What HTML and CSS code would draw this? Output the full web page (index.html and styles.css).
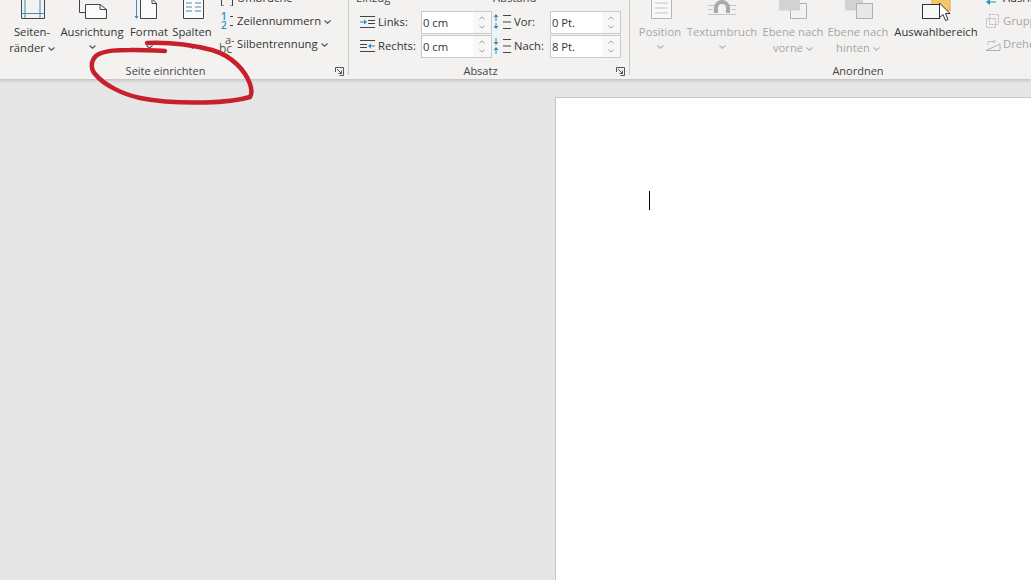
FILE: index.html
```html
<!DOCTYPE html>
<html lang="de">
<head>
    <meta charset="UTF-8">
    <title>Seite einrichten</title>
    <link rel="stylesheet" href="styles.css">
</head>
<body>
    <svg width="0" height="0" class="defs">
        <symbol id="chev" viewBox="0 0 7 4"><path d="M.5.5 3.5 3.2 6.5.5" fill="none" stroke="currentColor" stroke-width="1.1"/></symbol>
        <symbol id="launcher" viewBox="0 0 9 9"><path d="M.5 5V.5H8.5V8.5H4.5M2 2 6.5 6.5M6.5 3.5V6.5H3.5" fill="none" stroke="#555" stroke-width="1"/></symbol>
    </svg>

    <!-- Ribbon -->
    <header class="ribbon">
        <section class="group group-page">
            <div class="group-body">
                <div class="big w48">
                    <svg class="big-icon" width="48" height="24" viewBox="8 0 48 24">
                        <path d="M21.5 0V18.5H44.5V0" fill="none" stroke="#3c4a55"/>
                        <path d="M21.5 13.5H44.5M25 0V18M40 0V18" fill="none" stroke="#3f8fb5"/>
                    </svg>
                    <span>Seiten-</span>
                    <span>ränder <svg class="chev"><use href="#chev"/></svg></span>
                </div>
                <div class="big w72">
                    <svg class="big-icon" width="72" height="24" viewBox="56 0 72 24">
                        <path d="M79.5 0V12.5H85M79.5 0" fill="none" stroke="#444"/>
                        <path d="M85.5 4.500H100L106.500 9.500V18.500H85.500Z" fill="#fbfbfb" stroke="#444"/>
                        <path d="M100 4.500V9.500H107" fill="none" stroke="#444"/>
                    </svg>
                    <span>Ausrichtung</span>
                    <svg class="chev chev-line"><use href="#chev"/></svg>
                </div>
                <div class="big w42">
                    <svg class="big-icon" width="42" height="24" viewBox="128 0 42 24">
                        <path d="M140.500 0V18.500H156.500V3L153 0" fill="#fbfbfb" stroke="#444"/>
                        <path d="M152 0V3.500H156.500" fill="none" stroke="#444"/>
                        <path d="M136.500 0V18" stroke="#3f8fb5" fill="none"/>
                        <path d="M134.500 16 136.500 19 138.500 16Z" fill="#3f8fb5"/>
                    </svg>
                    <span>Format</span>
                    <svg class="chev chev-line"><use href="#chev"/></svg>
                </div>
                <div class="big w44">
                    <svg class="big-icon" width="44" height="24" viewBox="170 0 44 24">
                        <path d="M183.500 0V18.500H203.500V0" fill="#fbfbfb" stroke="#444"/>
                        <path d="M186 3H192M195 3H201M186 7H192M195 7H201M186 11H192M195 11H201" stroke="#3f8fb5" fill="none"/>
                    </svg>
                    <span>Spalten</span>
                    <svg class="chev chev-line"><use href="#chev"/></svg>
                </div>
                <div class="small-col">
                    <div class="small">
                        <svg class="small-icon" width="14" height="16" viewBox="0 0 14 16"><path d="M1.500 10V16M12.500 10V16M1.500 16H4M10 16H12.500" fill="none" stroke="#444"/></svg>
                        <span>Umbrüche</span>
                    </div>
                    <div class="small">
                        <span class="small-icon nums"><i>1</i><i>2</i></span>
                        <span>Zeilennummern <svg class="chev"><use href="#chev"/></svg></span>
                    </div>
                    <div class="small">
                        <span class="small-icon hyph"><i>a-</i><i>bc</i></span>
                        <span>Silbentrennung <svg class="chev"><use href="#chev"/></svg></span>
                    </div>
                </div>
            </div>
            <div class="group-label">Seite einrichten<svg class="launcher"><use href="#launcher"/></svg></div>
        </section>

        <section class="group group-para">
            <div class="group-body para-grid">
                <div class="para-col col-indent">
                    <div class="para-head">Einzug</div>
                    <div class="para-row">
                        <svg class="para-icon" width="15" height="12" viewBox="0 0 15 12">
                            <path d="M0 .5H15M8 4.500H15M8 7.500H15M0 11.500H15" stroke="#444" fill="none"/>
                            <path d="M0 6H5" stroke="#2a8fc0" fill="none"/><path d="M4 3.500 7 6 4 8.500Z" fill="#2a8fc0"/>
                        </svg>
                        <span class="para-label">Links:</span>
                        <div class="spin"><span class="spin-value">0 cm</span><div class="spin-btns"><svg class="chev up"><use href="#chev"/></svg><svg class="chev"><use href="#chev"/></svg></div></div>
                    </div>
                    <div class="para-row">
                        <svg class="para-icon" width="15" height="12" viewBox="0 0 15 12">
                            <path d="M0 .5H15M0 4.500H7M0 7.500H7M0 11.500H15" stroke="#444" fill="none"/>
                            <path d="M10 6H15" stroke="#2a8fc0" fill="none"/><path d="M11 3.500 8 6 11 8.500Z" fill="#2a8fc0"/>
                        </svg>
                        <span class="para-label">Rechts:</span>
                        <div class="spin"><span class="spin-value">0 cm</span><div class="spin-btns"><svg class="chev up"><use href="#chev"/></svg><svg class="chev"><use href="#chev"/></svg></div></div>
                    </div>
                </div>
                <div class="para-col col-space">
                    <div class="para-head">Abstand</div>
                    <div class="para-row">
                        <svg class="para-icon" width="19" height="16" viewBox="0 0 19 16">
                            <path d="M3 2V7M3 9V14" stroke="#2a8fc0" fill="none"/>
                            <path d="M.5 3 3 0 5.500 3ZM.5 12 3 15 5.500 12Z" fill="#2a8fc0"/>
                            <path d="M10 1.500H18M10 8H18M10 14.500H18" stroke="#444" fill="none"/>
                        </svg>
                        <span class="para-label">Vor:</span>
                        <div class="spin"><span class="spin-value">0 Pt.</span><div class="spin-btns"><svg class="chev up"><use href="#chev"/></svg><svg class="chev"><use href="#chev"/></svg></div></div>
                    </div>
                    <div class="para-row">
                        <svg class="para-icon" width="19" height="16" viewBox="0 0 19 16">
                            <path d="M3 0V5M3 11V16" stroke="#2a8fc0" fill="none"/>
                            <path d="M.5 4 3 7 5.500 4ZM.5 12 3 9 5.500 12Z" fill="#2a8fc0"/>
                            <path d="M10 1.500H18M10 8H18M10 14.500H18" stroke="#444" fill="none"/>
                        </svg>
                        <span class="para-label">Nach:</span>
                        <div class="spin"><span class="spin-value">8 Pt.</span><div class="spin-btns"><svg class="chev up"><use href="#chev"/></svg><svg class="chev"><use href="#chev"/></svg></div></div>
                    </div>
                </div>
            </div>
            <div class="group-label">Absatz<svg class="launcher"><use href="#launcher"/></svg></div>
        </section>

        <section class="group group-arrange">
            <div class="group-body">
                <div class="big w48 off">
                    <svg class="big-icon" width="48" height="24" viewBox="636 0 48 24">
                        <path d="M651.500 0V18.500H671.500V0" fill="#f8f8f8" stroke="#b5b5b5"/>
                        <path d="M655 3H668M655 8H668M655 13H668" stroke="#c4c4c4" fill="none"/>
                    </svg>
                    <span>Position</span>
                    <svg class="chev chev-line"><use href="#chev"/></svg>
                </div>
                <div class="big w76 off">
                    <svg class="big-icon" width="76" height="24" viewBox="684 0 76 24">
                        <path d="M708 5.500H715M729 5.500H736M708 9.500H713M731 9.500H736M708 14.500H736" stroke="#c4c4c4" fill="none"/>
                        <path d="M714 13V8A8 8 0 0 1 730 8V13H726V8A4 4 0 0 0 718 8V13Z" fill="#a9a9a9"/>
                    </svg>
                    <span>Textumbruch</span>
                    <svg class="chev chev-line"><use href="#chev"/></svg>
                </div>
                <div class="big w66 off">
                    <svg class="big-icon" width="66" height="24" viewBox="760 0 66 24">
                        <rect x="779" y="-2" width="21" height="12.500" fill="#d2d2d2"/>
                        <path d="M790.500 10.500V18.500H806.500V3.500H800" fill="none" stroke="#b0b0b0"/>
                    </svg>
                    <span>Ebene nach</span>
                    <span>vorne <svg class="chev"><use href="#chev"/></svg></span>
                </div>
                <div class="big w64 off">
                    <svg class="big-icon" width="64" height="24" viewBox="826 0 64 24">
                        <rect x="845" y="-2" width="18" height="12.500" fill="#d2d2d2"/>
                        <rect x="856.500" y="3.500" width="16" height="15" fill="#e8e8e8" stroke="#b0b0b0"/>
                    </svg>
                    <span>Ebene nach</span>
                    <span>hinten <svg class="chev"><use href="#chev"/></svg></span>
                </div>
                <div class="big w92">
                    <svg class="big-icon" width="92" height="24" viewBox="890 0 92 24">
                        <rect x="932" y="-2" width="18" height="12.500" fill="#f6c568" stroke="#e0a83f"/>
                        <rect x="922.500" y="4.500" width="17" height="14" fill="#f8f8f8" stroke="#333"/>
                        <path d="M939.500 3V17.500L943 14.500 945.500 20.500 948 19.500 945.500 13.500H950Z" fill="#fff" stroke="#333"/>
                    </svg>
                    <span>Auswahlbereich</span>
                </div>
                <div class="small-col col-tools">
                    <div class="small">
                        <svg class="small-icon" width="14" height="16" viewBox="0 0 14 16"><path d="M3 12H10" stroke="#2a8fc0" fill="none"/><path d="M0 12 4 9V15Z" fill="#2a8fc0"/></svg>
                        <span>Ausrichten</span>
                    </div>
                    <div class="small off">
                        <svg class="small-icon" width="16" height="16" viewBox="0 0 16 16"><path d="M4.500 1.500H13.500V11.500H4.500ZM1.500 5.500H10.500V14.500H1.500Z" fill="none" stroke="#b8b8b8" stroke-dasharray="2 1"/></svg>
                        <span>Gruppieren</span>
                    </div>
                    <div class="small off">
                        <svg class="small-icon" width="16" height="16" viewBox="0 0 16 16"><path d="M1 14.500H15V8L1 14.500" fill="none" stroke="#b0b0b0"/><path d="M3 9V5.500H10M8 3.500 10.500 5.500 8 7.500" fill="none" stroke="#c4c4c4"/></svg>
                        <span>Drehen</span>
                    </div>
                </div>
            </div>
            <div class="group-label">Anordnen</div>
        </section>
    </header>

    <!-- Document area -->
    <main class="workspace">
        <div class="page"><div class="caret"></div></div>
    </main>

    <!-- Hand drawn marker over the ribbon -->
    <svg class="marker" width="1031" height="580" viewBox="0 0 1031 580">
        <path d="M147 43C170 42 192 45 212 50C232 56 245 70 250 84C252 90 252 94 250 97C240 100 227 102 205 102.500C180 103 160 102 140 98C122 94 104 85 95 74C90 68 91 60 97 55C106 50 118 50 130 50C142 49.500 153 50.500 165 51" fill="none" stroke="#c8202a" stroke-width="4.500" stroke-linecap="round" stroke-linejoin="round"/>
    </svg>
</body>
</html>
```

FILE: styles.css
```css
* {
    box-sizing: border-box;
}
html, body {
    height: 100%;
}
body {
    font-family: "Open Sans", "Noto Sans", sans-serif;
    font-size: 11.25px;
    line-height: 16px;
    color: #333;
    margin: 0;
    display: flex;
    flex-direction: column;
    overflow: hidden;
    background: #e6e6e6;
}
.defs {
    position: absolute;
}
.ribbon {
    display: flex;
    height: 79px;
    flex: none;
    background: #f3f2f1;
    box-shadow: 0 1px 4px rgba(0, 0, 0, 0.22);
    overflow: hidden;
    position: relative;
}
.group {
    flex: none;
    display: flex;
    flex-direction: column;
    border-right: 1px solid #c9c9c9;
    height: 75px;
}
.group-page {
    width: 349px;
    padding-left: 8px;
}
.group-para {
    width: 281px;
}
.group-arrange {
    width: 456px;
    padding-left: 6px;
    border-right: none;
}
.group-body {
    display: flex;
    flex: none;
    height: 63px;
}
.group-label {
    position: relative;
    flex: none;
    text-align: center;
    font-size: 11px;
    line-height: 16px;
    color: #444;
}
.group-page .group-label {
    padding-right: 25px;
}
.group-para .group-label {
    padding-right: 17px;
}
.group-arrange .group-label {
    padding-right: 6px;
}
.launcher {
    position: absolute;
    width: 9px;
    height: 9px;
    right: 4px;
    top: 4px;
}

/* large buttons */
.big {
    display: flex;
    flex-direction: column;
    align-items: center;
    flex: none;
    white-space: nowrap;
}
.big-icon {
    display: block;
    flex: none;
}
.w42 { width: 42px; }
.w44 { width: 44px; }
.w48 { width: 48px; }
.w64 { width: 64px; }
.w66 { width: 66px; }
.w72 { width: 72px; }
.w76 { width: 76px; }
.w92 { width: 92px; }
.off {
    color: #a6a6a6;
}
.chev {
    width: 7px;
    height: 4px;
    vertical-align: 1px;
    color: #555;
}
.off .chev {
    color: #b5b5b5;
}
.chev-line {
    display: block;
    margin-top: 5px;
}

/* small buttons */
.small-col {
    display: flex;
    flex-direction: column;
    margin-top: -14px;
    padding-left: 5px;
}
.col-tools {
    padding-left: 3px;
}
.small {
    display: flex;
    align-items: center;
    height: 23px;
    white-space: nowrap;
}
.small-icon {
    flex: none;
    width: 16px;
    margin-right: 2px;
}
.nums, .hyph {
    display: flex;
    flex-direction: column;
}
.nums i, .hyph i {
    font-style: normal;
}
.nums {
    padding-left: 2px;
    color: #2a8fc0;
    font-size: 10px;
    line-height: 9px;
    font-weight: 600;
}
.nums i {
    display: flex;
    align-items: center;
}
.nums i::after {
    content: "";
    width: 3px;
    height: 1px;
    margin-left: 3px;
    background: #444;
}
.hyph {
    color: #555;
    font-size: 12px;
    line-height: 9px;
}
.hyph i:first-child {
    margin-left: 6px;
    font-size: 11px;
}

/* paragraph fields */
.group-body.para-grid {
    margin-top: -8px;
    height: 71px;
}
.para-col {
    display: flex;
    flex-direction: column;
}
.col-indent {
    width: 143px;
    padding-left: 7px;
}
.col-space {
    width: 129px;
    padding-left: 1px;
}
.para-head {
    height: 18px;
    line-height: 12px;
    color: #444;
}
.para-row {
    display: flex;
    align-items: center;
    height: 24px;
}
.col-indent .para-icon {
    margin-left: 4px;
    margin-right: 3px;
}
.col-indent .para-label {
    width: 43px;
}
.col-space .para-icon {
    margin-right: 2px;
}
.col-space .para-label {
    width: 36px;
}
.spin {
    display: flex;
    width: 71px;
    height: 23px;
    border: 1px solid #cacaca;
    background: #f7f7f7;
}
.spin-value {
    flex: 1;
    padding-left: 1px;
    line-height: 21px;
    background: #fff;
}
.spin-btns {
    width: 18px;
    display: flex;
    flex-direction: column;
    align-items: center;
    justify-content: center;
    gap: 5px;
}
.spin-btns .chev {
    display: block;
    width: 6px;
    color: #999;
}
.spin-btns .up {
    transform: rotate(180deg);
}

/* document */
.workspace {
    flex: 1;
    display: flex;
    padding: 18px 0 0 555px;
}
.page {
    flex: 1;
    background: #fff;
    border-left: 1px solid #c6c6c6;
    border-top: 1px solid #c6c6c6;
    padding: 93px 0 0 93px;
}
.caret {
    width: 1px;
    height: 19px;
    background: #000;
}

.marker {
    position: absolute;
    top: 0;
    left: 0;
    pointer-events: none;
}
```
